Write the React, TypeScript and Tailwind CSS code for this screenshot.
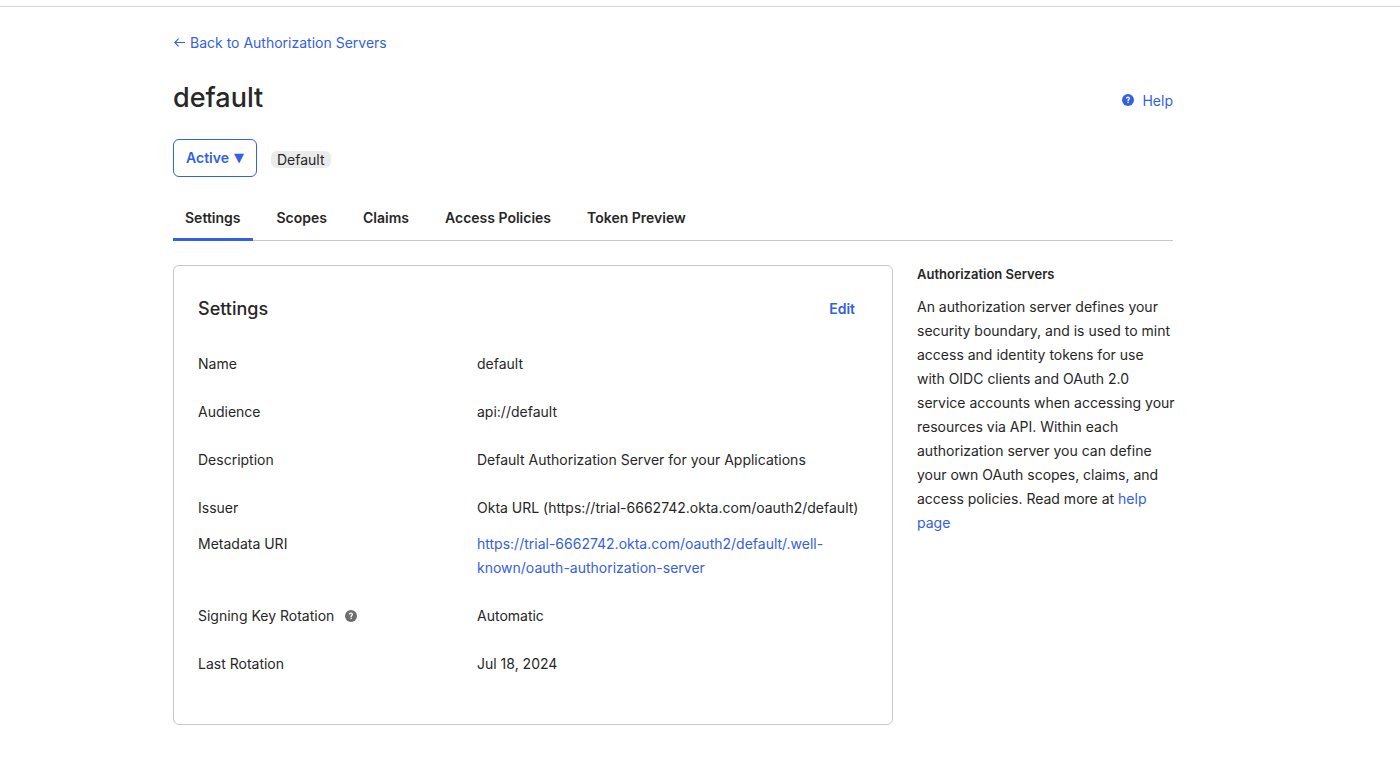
import type { ReactNode } from 'react';

type IconProps = { className?: string };

function HelpIcon({ className }: IconProps) {
  return (
    <svg viewBox="0 0 12 12" className={className} aria-hidden="true">
      <circle cx="6" cy="6" r="6" fill="currentColor" />
      <path
        d="M4.5 4.6C4.5 3.6 5.1 3.2 6 3.2S7.4 3.6 7.4 4.5C7.4 5.6 6.1 5.6 6.1 6.9"
        fill="none"
        stroke="white"
        strokeWidth="1.3"
      />
      <rect x="5.4" y="7.6" width="1.4" height="1.3" fill="white" />
    </svg>
  );
}

function BackArrow({ className }: IconProps) {
  return (
    <svg viewBox="0 0 12 12" className={className} fill="none" stroke="currentColor" strokeWidth="1.1" aria-hidden="true">
      <path d="M12 5.5H2.2M5.6 1.6L1.8 5.5L5.6 9.4" />
    </svg>
  );
}

const tabs = ['Settings', 'Scopes', 'Claims', 'Access Policies', 'Token Preview'];

type Row = { label: string; value: ReactNode; hint?: boolean; tight?: boolean };

const rows: Row[] = [
  { label: 'Name', value: 'default' },
  { label: 'Audience', value: 'api://default' },
  { label: 'Description', value: 'Default Authorization Server for your Applications' },
  { label: 'Issuer', value: 'Okta URL (https://trial-6662742.okta.com/oauth2/default)', tight: true },
  {
    label: 'Metadata URI',
    value: (
      <a href="#metadata" className="text-[#3461e1]">
        https://trial-6662742.okta.com/oauth2/default/.well-known/oauth-authorization-server
      </a>
    ),
  },
  { label: 'Signing Key Rotation', value: 'Automatic', hint: true },
  { label: 'Last Rotation', value: 'Jul 18, 2024' },
];

export default function App() {
  return (
    <div className="min-h-screen bg-white pt-[6px] font-['Inter',sans-serif] text-sm leading-6 text-[#272727]">
      <div className="border-t border-[#d7d7dc] pr-[54px]">
        <main className="mx-auto max-w-[1000px] pt-6 pb-11">
          <a href="#servers" className="inline-flex items-center gap-[5px] text-[#3461e1]">
            <BackArrow className="size-3" />
            Back to Authorization Servers
          </a>

          <header className="mt-6 flex items-center justify-between">
            <h1 className="text-[27px] leading-9 font-medium">default</h1>
            <a href="#help" className="mt-1.5 flex items-center gap-2 text-[#3461e1]">
              <HelpIcon className="mb-0.5 size-3" />
              Help
            </a>
          </header>

          <div className="mt-[23px] flex items-center gap-3.5">
            <button
              type="button"
              className="flex h-[38px] items-center gap-[5px] rounded-md border border-[#3461e1] px-3 font-semibold text-[#3461e1]"
            >
              Active <span className="font-['DejaVu_Sans',sans-serif] text-[13px] font-normal">▼</span>
            </button>
            <span className="mt-0.5 rounded-md bg-[#ebebeb] px-1.5 leading-[17px]">Default</span>
          </div>

          <nav className="mt-[25px] flex gap-3 border-b border-[#c8c8c8]">
            {tabs.map((tab, i) => (
              <a
                key={tab}
                href="#tab"
                aria-current={i === 0 ? 'page' : undefined}
                className={
                  i === 0
                    ? '-mb-px border-b-3 border-[#3461e1] px-3 pt-1 pb-2 font-semibold'
                    : 'px-3 pt-1 pb-2 font-semibold'
                }
              >
                {tab}
              </a>
            ))}
          </nav>

          <div className="mt-6 flex items-start gap-6">
            <section className="min-w-0 flex-1 rounded-md border border-[#c8c8c8] px-6 pt-[31px] pb-9">
              <div className="flex items-center justify-between pr-[13px]">
                <h2 className="text-lg leading-6 font-medium">Settings</h2>
                <button type="button" className="font-semibold text-[#3461e1]">
                  Edit
                </button>
              </div>
              <dl className="mt-[19px]">
                {rows.map((row) => (
                  <div key={row.label} className={row.tight ? 'flex pt-3' : 'flex py-3'}>
                    <dt className="flex w-[279px] shrink-0 items-start">
                      {row.label}
                      {row.hint && <HelpIcon className="mt-1.5 ml-[11px] size-3 text-[#6e6e6e]" />}
                    </dt>
                    <dd className="min-w-0 flex-1">{row.value}</dd>
                  </div>
                ))}
              </dl>
            </section>

            <aside className="w-64 shrink-0">
              <h3 className="text-[13px] leading-[18px] font-semibold">Authorization Servers</h3>
              <p className="mt-3 -mr-0.5">
                An authorization server defines your security boundary, and is used to mint access and identity tokens
                for use with OIDC clients and OAuth 2.0 service accounts when accessing your resources via API. Within
                each authorization server you can define your own OAuth scopes, claims, and access policies. Read more
                at{' '}
                <a href="#help-page" className="text-[#3461e1]">
                  help page
                </a>
              </p>
            </aside>
          </div>
        </main>
      </div>
    </div>
  );
}
